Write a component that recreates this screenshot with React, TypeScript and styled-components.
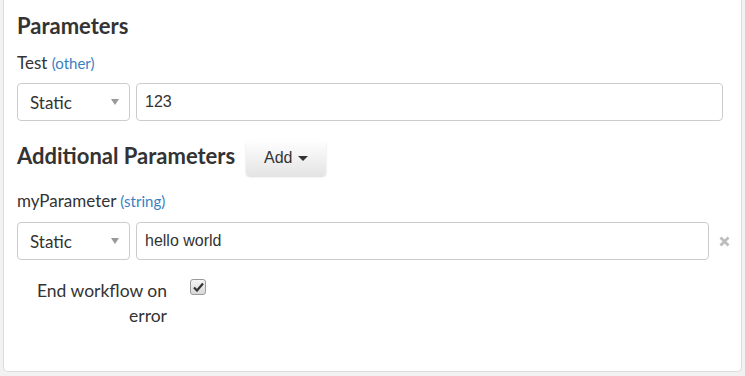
import React, {useState} from "react";
import styled, {createGlobalStyle} from "styled-components";

const GlobalStyle = createGlobalStyle`
  html, body {
    margin: 0;
    padding: 0;
    background: #f2f2f2;
    font-family: Lato, "Open Sans", sans-serif;
    color: #333;
  }
`

const Page = styled.div`
  width: 745px;
  height: 376px;
  box-sizing: border-box;
  padding: 0 3px 4px 3px;
  background: #f2f2f2;
`

const Panel = styled.div`
  box-sizing: border-box;
  height: 372px;
  padding: 13px 18px 0 13px;
  background: #fff;
  border: 1px solid #dcdcdc;
  border-top: none;
  border-radius: 0 0 5px 5px;
`

const Heading = styled.h3`
  margin: 0;
  font-size: 22px;
  line-height: 26px;
  font-weight: 700;
  color: #333;
`

const HeadingRow = styled.div`
  display: flex;
  align-items: flex-start;
  gap: 11px;
  margin-top: 19px;
  height: 36px;

  ${Heading} {
    padding-top: 3px;
  }
`

const AddButton = styled.button`
  display: flex;
  align-items: center;
  justify-content: center;
  gap: 6px;
  width: 80px;
  height: 36px;
  padding: 0;
  border: none;
  border-radius: 4px;
  font-family: "Liberation Sans", Arial, sans-serif;
  font-size: 16px;
  color: #333;
  background: linear-gradient(to bottom, #fff 0%, #e4e4e4 100%);
  box-shadow: 0 1px 2px rgba(0, 0, 0, 0.15);
  cursor: pointer;
`

const Caret = styled.span`
  display: inline-block;
  width: 0;
  height: 0;
  border-left: 5px solid transparent;
  border-right: 5px solid transparent;
  border-top: 5px solid #333;
`

const Label = styled.div<{ top: number }>`
  margin-top: ${p => p.top}px;
  font-size: 17px;
  line-height: 22px;
  color: #333;
`

const TypeHint = styled.span`
  font-size: 15px;
  color: #3a7fc1;
`

const FieldRow = styled.div<{ top: number }>`
  display: flex;
  align-items: center;
  gap: 6px;
  margin-top: ${p => p.top}px;
`

const Select = styled.div`
  box-sizing: border-box;
  width: 113px;
  height: 38px;
  padding: 0 10px 0 12px;
  display: flex;
  align-items: center;
  justify-content: space-between;
  border: 1px solid #ccc;
  border-radius: 4px;
  background: #fff;
  font-size: 17px;
  color: #333;
`

const SelectArrow = styled.span`
  width: 0;
  height: 0;
  border-left: 4px solid transparent;
  border-right: 4px solid transparent;
  border-top: 6px solid #999;
`

const Input = styled.input`
  flex: 1;
  min-width: 0;
  box-sizing: border-box;
  height: 38px;
  padding: 0 8px;
  border: 1px solid #ccc;
  border-radius: 4px;
  font-family: "Liberation Sans", Arial, sans-serif;
  font-size: 16px;
  color: #333;
  outline: none;
`

const Remove = styled.span`
  display: flex;
  align-items: center;
  justify-content: center;
  width: 14px;
  margin-left: 2px;
  margin-right: -8px;
  cursor: pointer;
`

const OptionRow = styled.div`
  display: flex;
  align-items: flex-start;
  gap: 23px;
  margin-top: 18px;
`

const OptionLabel = styled.div`
  width: 150px;
  text-align: right;
  font-size: 17.5px;
  line-height: 25px;
  color: #333;
`

const CheckBox = styled.span`
  box-sizing: border-box;
  display: flex;
  align-items: center;
  justify-content: center;
  width: 16px;
  height: 16px;
  margin-top: 1px;
  border: 1px solid #9a9a9a;
  border-radius: 3px;
  background: linear-gradient(to bottom, #f4f4f4, #d8d8d8);
  cursor: pointer;
`

const App = () => {
  const [endOnError, setEndOnError] = useState<boolean>(true)

  return (
    <Page>
      <GlobalStyle/>
      <Panel>
        <Heading>Parameters</Heading>
        <Label top={13}>Test <TypeHint>(other)</TypeHint></Label>
        <FieldRow top={9}>
          <Select>Static<SelectArrow/></Select>
          <Input defaultValue="123"/>
        </FieldRow>

        <HeadingRow>
          <Heading>Additional Parameters</Heading>
          <AddButton>Add <Caret/></AddButton>
        </HeadingRow>
        <Label top={14}>myParameter <TypeHint>(string)</TypeHint></Label>
        <FieldRow top={10}>
          <Select>Static<SelectArrow/></Select>
          <Input defaultValue="hello world"/>
          <Remove>
            <svg width="11" height="11" viewBox="0 0 11 11">
              <path d="M1.5 1.5 L9.5 9.5 M9.5 1.5 L1.5 9.5" stroke="#bdbdbd" strokeWidth="2.8"/>
            </svg>
          </Remove>
        </FieldRow>

        <OptionRow>
          <OptionLabel>End workflow on error</OptionLabel>
          <CheckBox onClick={() => setEndOnError(!endOnError)}>
            {endOnError && (
              <svg width="11" height="10" viewBox="0 0 11 10">
                <path d="M1 5.5 L4 8.5 L10 1.5" fill="none" stroke="#333" strokeWidth="2.2"/>
              </svg>
            )}
          </CheckBox>
        </OptionRow>
      </Panel>
    </Page>
  )
}

export default App
